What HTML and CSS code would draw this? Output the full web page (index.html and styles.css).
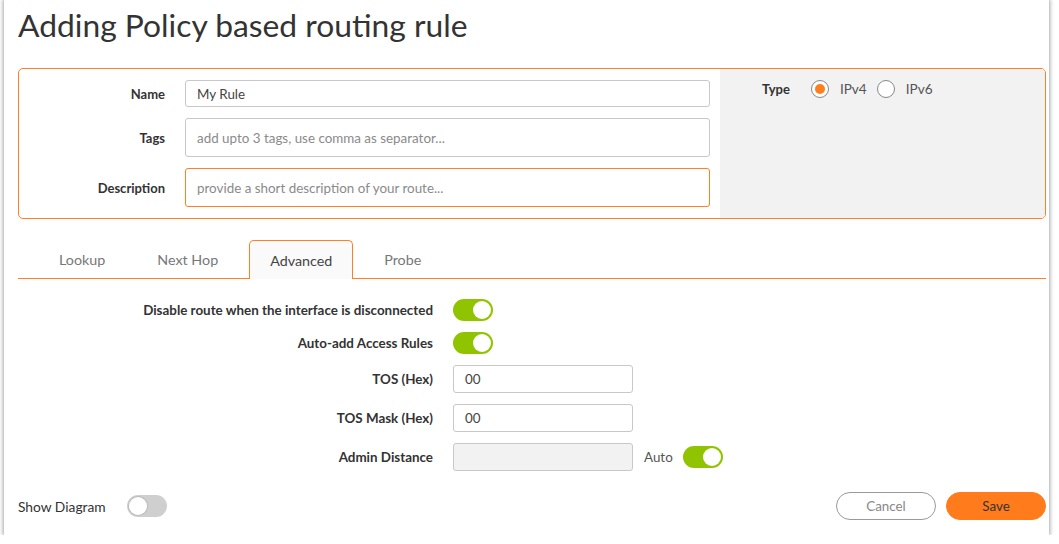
FILE: index.html
```html
<!DOCTYPE html>
<html>
<head>
<meta charset="utf-8">
<link rel="stylesheet" href="styles.css">
</head>
<body>
<div class="card">
  <h1 class="title">Adding Policy based routing rule</h1>
  <div class="formbox">
    <div class="left">
      <div class="frow"><label class="flabel">Name</label><div class="input h27">My Rule</div></div>
      <div class="frow"><label class="flabel">Tags</label><div class="input h39 ph">add upto 3 tags, use comma as separator...</div></div>
      <div class="frow"><label class="flabel">Description</label><div class="input h39 ph focus">provide a short description of your route...</div></div>
    </div>
    <div class="right">
      <span class="flabel tlabel">Type</span>
      <span class="radio on"></span><span class="rtext">IPv4</span>
      <span class="radio"></span><span class="rtext">IPv6</span>
    </div>
  </div>
  <div class="tabs">
    <div class="tab">Lookup</div>
    <div class="tab">Next Hop</div>
    <div class="tab active">Advanced</div>
    <div class="tab">Probe</div>
  </div>
  <div class="adv">
    <div class="arow"><span class="alabel">Disable route when the interface is disconnected</span><span class="toggle on"></span></div>
    <div class="arow"><span class="alabel">Auto-add Access Rules</span><span class="toggle on"></span></div>
    <div class="arow tall"><span class="alabel">TOS (Hex)</span><div class="input small">00</div></div>
    <div class="arow tall"><span class="alabel">TOS Mask (Hex)</span><div class="input small">00</div></div>
    <div class="arow tall"><span class="alabel">Admin Distance</span><div class="input small disabled"></div><span class="auto">Auto</span><span class="toggle on"></span></div>
  </div>
  <div class="footer">
    <div class="show"><span class="showlabel">Show Diagram</span><span class="toggle off"></span></div>
    <div class="btns"><button class="btn cancel">Cancel</button><button class="btn save">Save</button></div>
  </div>
</div>
</body>
</html>
```
FILE: styles.css
```css
* { box-sizing: border-box; }
html, body { margin: 0; padding: 0; background: #fff; }
body { font-family: "Lato", "Noto Sans", sans-serif; color: #333; }
.card {
  margin-left: 4px;
  width: 1045px;
  height: 535px;
  background: #fff;
  box-shadow: 0 0 4px 1px rgba(0,0,0,0.35);
  padding: 0 3px 0 14px;
  display: flex;
  flex-direction: column;
}
.card > * { flex-shrink: 0; }
.title {
  margin: 0;
  padding-top: 7px;
  height: 68px;
  font-weight: 400;
  font-size: 31.8px;
  line-height: 36px;
  color: #333;
}
.formbox {
  height: 151px;
  border: 1px solid #ff7f24;
  border-radius: 5px;
  display: flex;
  overflow: hidden;
}
.left {
  width: 701px;
  padding: 11px 0 0 0;
  display: flex;
  flex-direction: column;
  gap: 11px;
}
.frow { display: flex; align-items: center; }
.flabel {
  width: 146px;
  text-align: right;
  font-weight: 700;
  font-size: 13px;
  color: #333;
  margin-right: 20px;
}
.input {
  border: 1px solid #c8c8c8;
  border-radius: 3px;
  font-size: 13.4px;
  color: #444;
  padding: 0 11px;
  display: flex;
  align-items: center;
  background: #fff;
  flex-shrink: 0;
}
.left .input { width: 525px; }
.h27 { height: 27px; }
.h39 { height: 39px; }
.ph { color: #8a8a8a; }
.focus { border-color: #ff7f24; }
.right {
  flex: 1;
  background: #f2f2f2;
  display: flex;
  align-self: stretch;
  padding: 9px 0 0 42px;
  align-items: flex-start;
}
.tlabel { width: auto; margin-right: 21px; line-height: 22px; }
.radio {
  width: 18px; height: 18px;
  border: 1px solid #888;
  border-radius: 50%;
  margin-top: 2px;
  position: relative;
  background: #fff;
  flex-shrink: 0;
}
.radio.on::after {
  content: ""; position: absolute; left: 3px; top: 3px;
  width: 10px; height: 10px; border-radius: 50%; background: #ff7f1e;
}
.rtext { font-size: 13.6px; color: #555; margin: 0 10px 0 11px; line-height: 22px; }
.tabs {
  margin-top: 21px;
  height: 39px;
  border-bottom: 1px solid #ff7f24;
  display: flex;
  align-items: flex-end;
  gap: 10px;
  padding-left: 20px;
}
.tab {
  height: 38px;
  padding: 0 20px;
  border: 1px solid transparent;
  border-bottom: none;
  font-size: 14.3px;
  color: #777;
  display: flex;
  align-items: center;
  justify-content: center;
}
.tab.active {
  height: 39px;
  margin-bottom: -1px;
  background: #fafafa;
  border-color: #ff7f24;
  border-radius: 5px 5px 0 0;
  color: #444;
}
.adv { padding-top: 14px; display: flex; flex-direction: column; }
.arow { display: flex; align-items: center; height: 33px; }
.arow.tall { height: 39px; }
.alabel {
  width: 415px;
  text-align: right;
  font-size: 13.4px;
  font-weight: 700;
  color: #333;
  margin-right: 20px;
  flex-shrink: 0;
}
.toggle {
  width: 40px; height: 22px;
  border-radius: 11px;
  position: relative;
  display: inline-block;
  flex-shrink: 0;
}
.toggle.on { background: #90c400; }
.toggle.off { background: #cfcfcf; }
.toggle::after {
  content: ""; position: absolute; top: 2px;
  width: 18px; height: 18px; border-radius: 50%;
  background: #fff;
}
.toggle.on::after { right: 2px; }
.toggle.off::after { left: 2px; box-shadow: 0 0 0 1px #bbb; }
.input.small { width: 180px; height: 28px; }
.input.disabled { background: #f2f2f2; }
.auto { font-size: 13.4px; color: #555; margin: 0 10px 0 11px; }
.footer {
  margin-top: auto;
  height: 58px;
  display: flex;
  align-items: center;
  justify-content: space-between;
}
.show { display: flex; align-items: center; }
.showlabel { font-size: 13.8px; font-weight: 400; color: #333; margin-right: 21px; }
.btns { display: flex; gap: 10px; }
.btn {
  width: 100px; height: 28px; border-radius: 14px;
  font-family: inherit; font-size: 13.4px;
}
.cancel { background: #fff; border: 1px solid #9a9a9a; color: #888; }
.save { background: #ff7b1c; border: 1px solid #ff7b1c; color: #333; }
```
